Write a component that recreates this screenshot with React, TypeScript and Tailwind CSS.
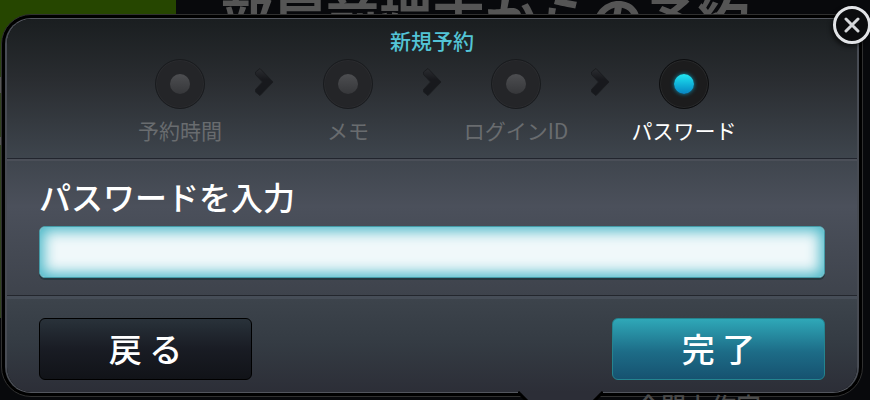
import { useState } from "react"

const steps = ["予約時間", "メモ", "ログインID", "パスワード"]

function StepDot({ active }: { active: boolean }) {
  return (
    <span
      className={
        active
          ? "flex h-[50px] w-[50px] items-center justify-center rounded-full border border-[#0c0d0f] bg-[#1c1c1d] shadow-[inset_0_0_0_1px_#272829]"
          : "flex h-[50px] w-[50px] items-center justify-center rounded-full border border-[#191b1e] bg-[#242528] shadow-[inset_0_0_0_1px_#2a2b2e]"
      }
    >
      <span
        className={
          active
            ? "h-5 w-5 rounded-full bg-linear-to-b from-[#22e8f2] to-[#0a84c2] shadow-[0_0_4px_#118fae]"
            : "h-5 w-5 rounded-full bg-linear-to-b from-[#4d4e51] to-[#36373a]"
        }
      />
    </span>
  )
}

function StepArrow() {
  return (
    <svg viewBox="0 0 20 30" className="mt-2 h-[30px] w-5" aria-hidden="true">
      <defs>
        <linearGradient id="arrow" x1="0" y1="0" x2="0" y2="1">
          <stop offset="0" stopColor="#2b2d31" />
          <stop offset="0.4" stopColor="#18191d" />
          <stop offset="1" stopColor="#17191d" />
        </linearGradient>
      </defs>
      <path
        d="M6 1.5 L19 15 L6 28.5 L1.5 25 L1.5 22.5 L8.5 15 L1.5 7.5 L1.5 5 Z"
        fill="url(#arrow)"
        stroke="#1b1d20"
        strokeWidth="1"
        strokeLinejoin="round"
      />
    </svg>
  )
}

export default function App() {
  const [password, setPassword] = useState("")
  const current = 3

  return (
    <div className="relative overflow-hidden bg-[#08090c] font-['Noto_Sans_CJK_JP',sans-serif]">
      {/* Dimmed page behind the dialog */}
      <div className="absolute inset-0 flex">
        <div className="h-[318px] w-[176px] bg-linear-to-b from-[#264600] from-10% to-[#31421f] to-30%">
          <div className="mt-[77px] h-4 w-1 bg-[#555]" />
          <div className="mt-11 h-2 w-1 bg-[#555]" />
        </div>
        <h1 className="ml-11 text-[53px] leading-[36px] font-bold whitespace-nowrap text-[#555]">
          部屋前端末からの予約
        </h1>
      </div>

      <div className="relative pt-[14px] pr-[7px] pb-[3px] pl-px">
        <div
          role="dialog"
          aria-labelledby="title"
          className="relative rounded-[30px] border border-[#303030] bg-black p-[3px]"
        >
          <div className="overflow-hidden rounded-[26px] border border-x-2 border-[#53565e] border-x-[#484c54]">
            <section className="bg-linear-to-b from-[#1a1e20] via-[#2a2d31] via-45% to-[#3e454d] pt-[5px] pb-[13px]">
              <h2 id="title" className="mb-[3px] text-center text-[21px] leading-8 font-medium text-[#53c4d6]">
                新規予約
              </h2>
              <ol className="flex justify-center">
                {steps.map((label, i) => (
                  <li key={label} className="relative flex w-[168px] flex-col items-center">
                    <StepDot active={i === current} />
                    <span
                      className={
                        i === current
                          ? "mt-1.5 text-[21px] leading-[30px] text-white"
                          : "mt-1.5 text-[21px] leading-[30px] text-[#696c6f]"
                      }
                    >
                      {label}
                    </span>
                    {i < steps.length - 1 && (
                      <span className="absolute top-0 -right-[10px]">
                        <StepArrow />
                      </span>
                    )}
                  </li>
                ))}
              </ol>
            </section>

            <section className="border-t border-[#22252e] bg-linear-to-b from-[#3f454d] via-[#4b505b] via-35% to-[#3e434c] px-8 pb-[17px] shadow-[inset_0_2px_0_#4b4f58]">
              <label htmlFor="password" className="mb-[3px] block pt-[10px] text-[32px] leading-[54px] font-medium text-white">
                パスワードを入力
              </label>
              <input
                id="password"
                type="password"
                value={password}
                onChange={(e) => setPassword(e.target.value)}
                className="block h-[52px] w-full rounded-md border border-[#459ba7] bg-[#f0f8fa] px-5 text-2xl text-[#222] shadow-[inset_0_0_14px_4px_#4cb8c8,0_2px_0_#28383f] outline-none"
              />
            </section>

            <section className="flex justify-between border-t border-[#23262d] bg-linear-to-b from-[#3d444c] via-[#343b43] to-[#2c2e37] px-8 pt-[22px] pb-3 shadow-[inset_0_3px_0_#464d57]">
              <button
                type="button"
                className="h-[62px] w-[213px] rounded-md border border-black bg-linear-to-b from-[#29323a] via-[#191c24] via-50% to-[#111318] pb-0.5 text-[33px] leading-none font-medium text-white"
              >
                戻 る
              </button>
              <button
                type="button"
                className="h-[62px] w-[213px] rounded-md border border-[#24848f] bg-linear-to-b from-[#2fa8b8] via-[#1d6c87] via-55% to-[#165270] pb-0.5 text-[33px] leading-none font-medium text-white"
              >
                完 了
              </button>
            </section>
          </div>

          {/* Balloon tail */}
          <svg viewBox="0 0 85 10" className="absolute top-full left-[60%] -mt-[5px] h-[10px] w-[85px]" aria-hidden="true">
            <path d="M1 0 L84 0 L76 10 L9 10 Z" fill="#2c2e37" />
            <path d="M0 1 L9 10 M85 1 L76 10" stroke="#000" strokeWidth="3" />
          </svg>
        </div>

        <p className="absolute top-[392px] right-[109px] text-[25px] leading-[27px] font-medium text-[#4c4c4c]">
          会開上作家
        </p>

        <button
          type="button"
          aria-label="閉じる"
          className="absolute top-[6px] -right-[1px] flex h-[38px] w-[38px] items-center justify-center rounded-full border-[3px] border-[#e2e4e7] bg-[#0b0c0e] shadow-[-2px_3px_4px_#0008]"
        >
          <svg viewBox="0 0 16 16" className="h-4 w-4" aria-hidden="true">
            <path d="M2 2 L14 14 M14 2 L2 14" stroke="#d4d6d9" strokeWidth="3" strokeLinecap="round" />
          </svg>
        </button>
      </div>
    </div>
  )
}
